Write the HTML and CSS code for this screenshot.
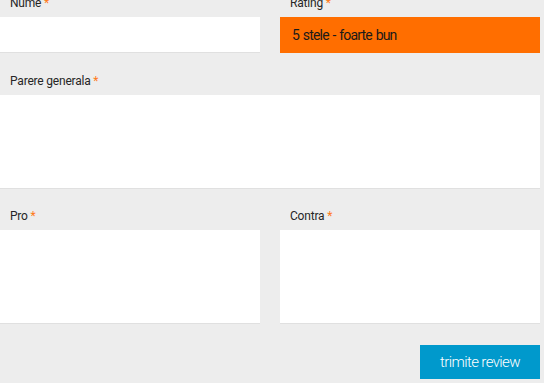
FILE: index.html
```html
<!DOCTYPE html>
<html lang="ro">
<head>
    <meta charset="UTF-8">
    <meta name="viewport" content="width=device-width, initial-scale=1.0">
    <title>Review</title>
    <link rel="stylesheet" href="styles.css">
</head>
<body>
    <form class="review-form">
        <div class="row two-cols">
            <div class="field">
                <label for="nume">Nume <span class="req">*</span></label>
                <input type="text" id="nume" name="nume">
            </div>
            <div class="field">
                <label for="rating">Rating <span class="req">*</span></label>
                <select id="rating" name="rating" class="rating-select">
                    <option>5 stele - foarte bun</option>
                    <option>4 stele - bun</option>
                    <option>3 stele - mediu</option>
                    <option>2 stele - slab</option>
                    <option>1 stea - foarte slab</option>
                </select>
            </div>
        </div>

        <div class="row">
            <div class="field">
                <label for="parere">Parere generala <span class="req">*</span></label>
                <textarea id="parere" name="parere"></textarea>
            </div>
        </div>

        <div class="row two-cols">
            <div class="field">
                <label for="pro">Pro <span class="req">*</span></label>
                <textarea id="pro" name="pro"></textarea>
            </div>
            <div class="field">
                <label for="contra">Contra <span class="req">*</span></label>
                <textarea id="contra" name="contra"></textarea>
            </div>
        </div>

        <div class="actions">
            <button type="submit" class="submit-button">trimite review</button>
        </div>
    </form>
</body>
</html>
```

FILE: styles.css
```css
body {
    margin: 0;
    background-color: #ededed;
    font-family: Roboto, "Liberation Sans", sans-serif;
    color: #222;
}
.review-form {
    width: 540px;
    margin-top: -4px;
}
.row {
    margin-bottom: 21px;
}
.two-cols {
    display: grid;
    grid-template-columns: 260px 260px;
    column-gap: 20px;
}
.field label {
    display: block;
    padding-left: 10px;
    margin-bottom: 7px;
    font-size: 12px;
    line-height: 14px;
    letter-spacing: -0.2px;
    color: #262626;
}
.req {
    color: #ff7a1a;
}
input,
textarea,
.rating-select {
    display: block;
    width: 100%;
    box-sizing: border-box;
    margin: 0;
    border: none;
    border-radius: 0;
    outline: none;
    background-color: #fff;
    font-family: inherit;
}
input {
    height: 35px;
    box-shadow: 0 1px 0 #e0e0e0;
}
.rating-select {
    -webkit-appearance: none;
    appearance: none;
    height: 36px;
    padding: 0 12px;
    background-color: #ff6e00;
    color: #1a1a1a;
    font-size: 14px;
    letter-spacing: -0.8px;
    word-spacing: 1px;
}
textarea {
    height: 93px;
    resize: none;
    box-shadow: 0 1px 0 #e0e0e0;
}
.actions {
    display: flex;
    justify-content: flex-end;
    margin-top: 22px;
}
.submit-button {
    width: 120px;
    height: 34px;
    border: none;
    background-color: #0099cc;
    color: #fff;
    font-family: inherit;
    font-size: 15px;
    font-weight: 300;
    letter-spacing: -0.6px;
    cursor: pointer;
}
```
